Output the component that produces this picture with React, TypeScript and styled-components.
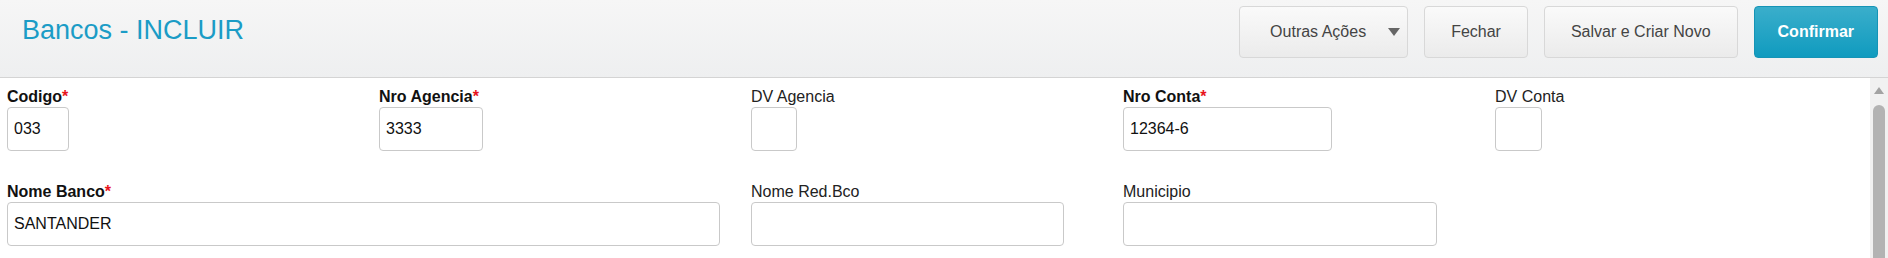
import styled, { createGlobalStyle } from 'styled-components'

const GlobalStyle = createGlobalStyle`
	html, body {
		margin: 0;
		padding: 0;
		background: #fff;
		font-family: 'Liberation Sans', Arial, sans-serif;
	}
`

const Page = styled.div`
	width: 1888px;
	height: 258px;
	display: flex;
	flex-direction: column;
	overflow: hidden;
`

const Header = styled.header`
	height: 77px;
	flex: none;
	display: flex;
	align-items: flex-start;
	justify-content: space-between;
	padding: 0 10px 0 22px;
	background: linear-gradient(#f6f6f6, #eeeff0);
	border-bottom: 1px solid #d4d4d4;
`

const Title = styled.h1`
	margin: 0;
	padding-top: 15px;
	font-size: 27px;
	line-height: 31px;
	font-weight: normal;
	color: #1b9cc6;
`

const Toolbar = styled.div`
	display: flex;
	gap: 16px;
	padding-top: 6px;
`

const Button = styled.button<{ $primary?: boolean; $pad?: number }>`
	height: 52px;
	display: flex;
	align-items: center;
	padding: 0 ${p => p.$pad ?? 26}px;
	font-family: inherit;
	font-size: 16px;
	font-weight: ${p => (p.$primary ? 'bold' : 'normal')};
	color: ${p => (p.$primary ? '#fff' : '#444')};
	border-radius: 4px;
	border: 1px solid ${p => (p.$primary ? '#1594b6' : '#d8d8d8')};
	background: ${p =>
		p.$primary
			? 'linear-gradient(#3aaecb, #109bbf)'
			: 'linear-gradient(#fafafa, #ebebeb)'};
	cursor: pointer;
`

const Caret = styled.span`
	width: 0;
	height: 0;
	margin-left: 22px;
	margin-right: -23px;
	border-left: 6px solid transparent;
	border-right: 6px solid transparent;
	border-top: 8px solid #666;
`

const Body = styled.div`
	flex: 1;
	display: flex;
	min-height: 0;
`

const Form = styled.div`
	flex: 1;
	display: grid;
	grid-template-columns: repeat(5, 372px);
	row-gap: 32px;
	align-content: start;
	padding: 10px 0 0 7px;
`

const Field = styled.div<{ $span?: number }>`
	grid-column: span ${p => p.$span ?? 1};
	display: flex;
	flex-direction: column;
	align-items: flex-start;
`

const Label = styled.label<{ $required?: boolean }>`
	font-size: 16px;
	line-height: 18px;
	height: 18px;
	margin-bottom: 1px;
	font-weight: ${p => (p.$required ? 'bold' : 'normal')};
	color: ${p => (p.$required ? '#111' : '#222')};
`

const Star = styled.span`
	color: #e8141c;
`

const Input = styled.input<{ $w: number }>`
	box-sizing: border-box;
	width: ${p => p.$w}px;
	height: 44px;
	padding: 0 6px;
	border: 1px solid #c9c9c9;
	border-radius: 4px;
	font-family: inherit;
	font-size: 16px;
	color: #111;
	background: #fff;
	outline: none;
`

const Scrollbar = styled.div`
	width: 18px;
	flex: none;
	background: #f1f1f1;
	display: flex;
	flex-direction: column;
	align-items: center;
`

const ScrollArrow = styled.span`
	margin-top: 9px;
	width: 0;
	height: 0;
	border-left: 5px solid transparent;
	border-right: 5px solid transparent;
	border-bottom: 7px solid #a3a3a3;
`

const Thumb = styled.div`
	margin-top: 11px;
	width: 12px;
	flex: 1;
	border-radius: 6px 6px 0 0;
	background: #b3b3b3;
`

const fields = [
	{ label: 'Codigo', required: true, w: 62, value: '033' },
	{ label: 'Nro Agencia', required: true, w: 104, value: '3333' },
	{ label: 'DV Agencia', w: 46, value: '' },
	{ label: 'Nro Conta', required: true, w: 209, value: '12364-6' },
	{ label: 'DV Conta', w: 47, value: '' },
	{ label: 'Nome Banco', required: true, w: 713, value: 'SANTANDER', span: 2 },
	{ label: 'Nome Red.Bco', w: 313, value: '' },
	{ label: 'Municipio', w: 314, value: '' },
]

export default function App() {
	return (
		<Page>
			<GlobalStyle />
			<Header>
				<Title>Bancos - INCLUIR</Title>
				<Toolbar>
					<Button $pad={30}>
						Outras Ações
						<Caret />
					</Button>
					<Button>Fechar</Button>
					<Button>Salvar e Criar Novo</Button>
					<Button $primary $pad={23}>
						Confirmar
					</Button>
				</Toolbar>
			</Header>
			<Body>
				<Form>
					{fields.map(f => (
						<Field key={f.label} $span={f.span}>
							<Label $required={f.required}>
								{f.label}
								{f.required && <Star>*</Star>}
							</Label>
							<Input $w={f.w} defaultValue={f.value} />
						</Field>
					))}
				</Form>
				<Scrollbar>
					<ScrollArrow />
					<Thumb />
				</Scrollbar>
			</Body>
		</Page>
	)
}
